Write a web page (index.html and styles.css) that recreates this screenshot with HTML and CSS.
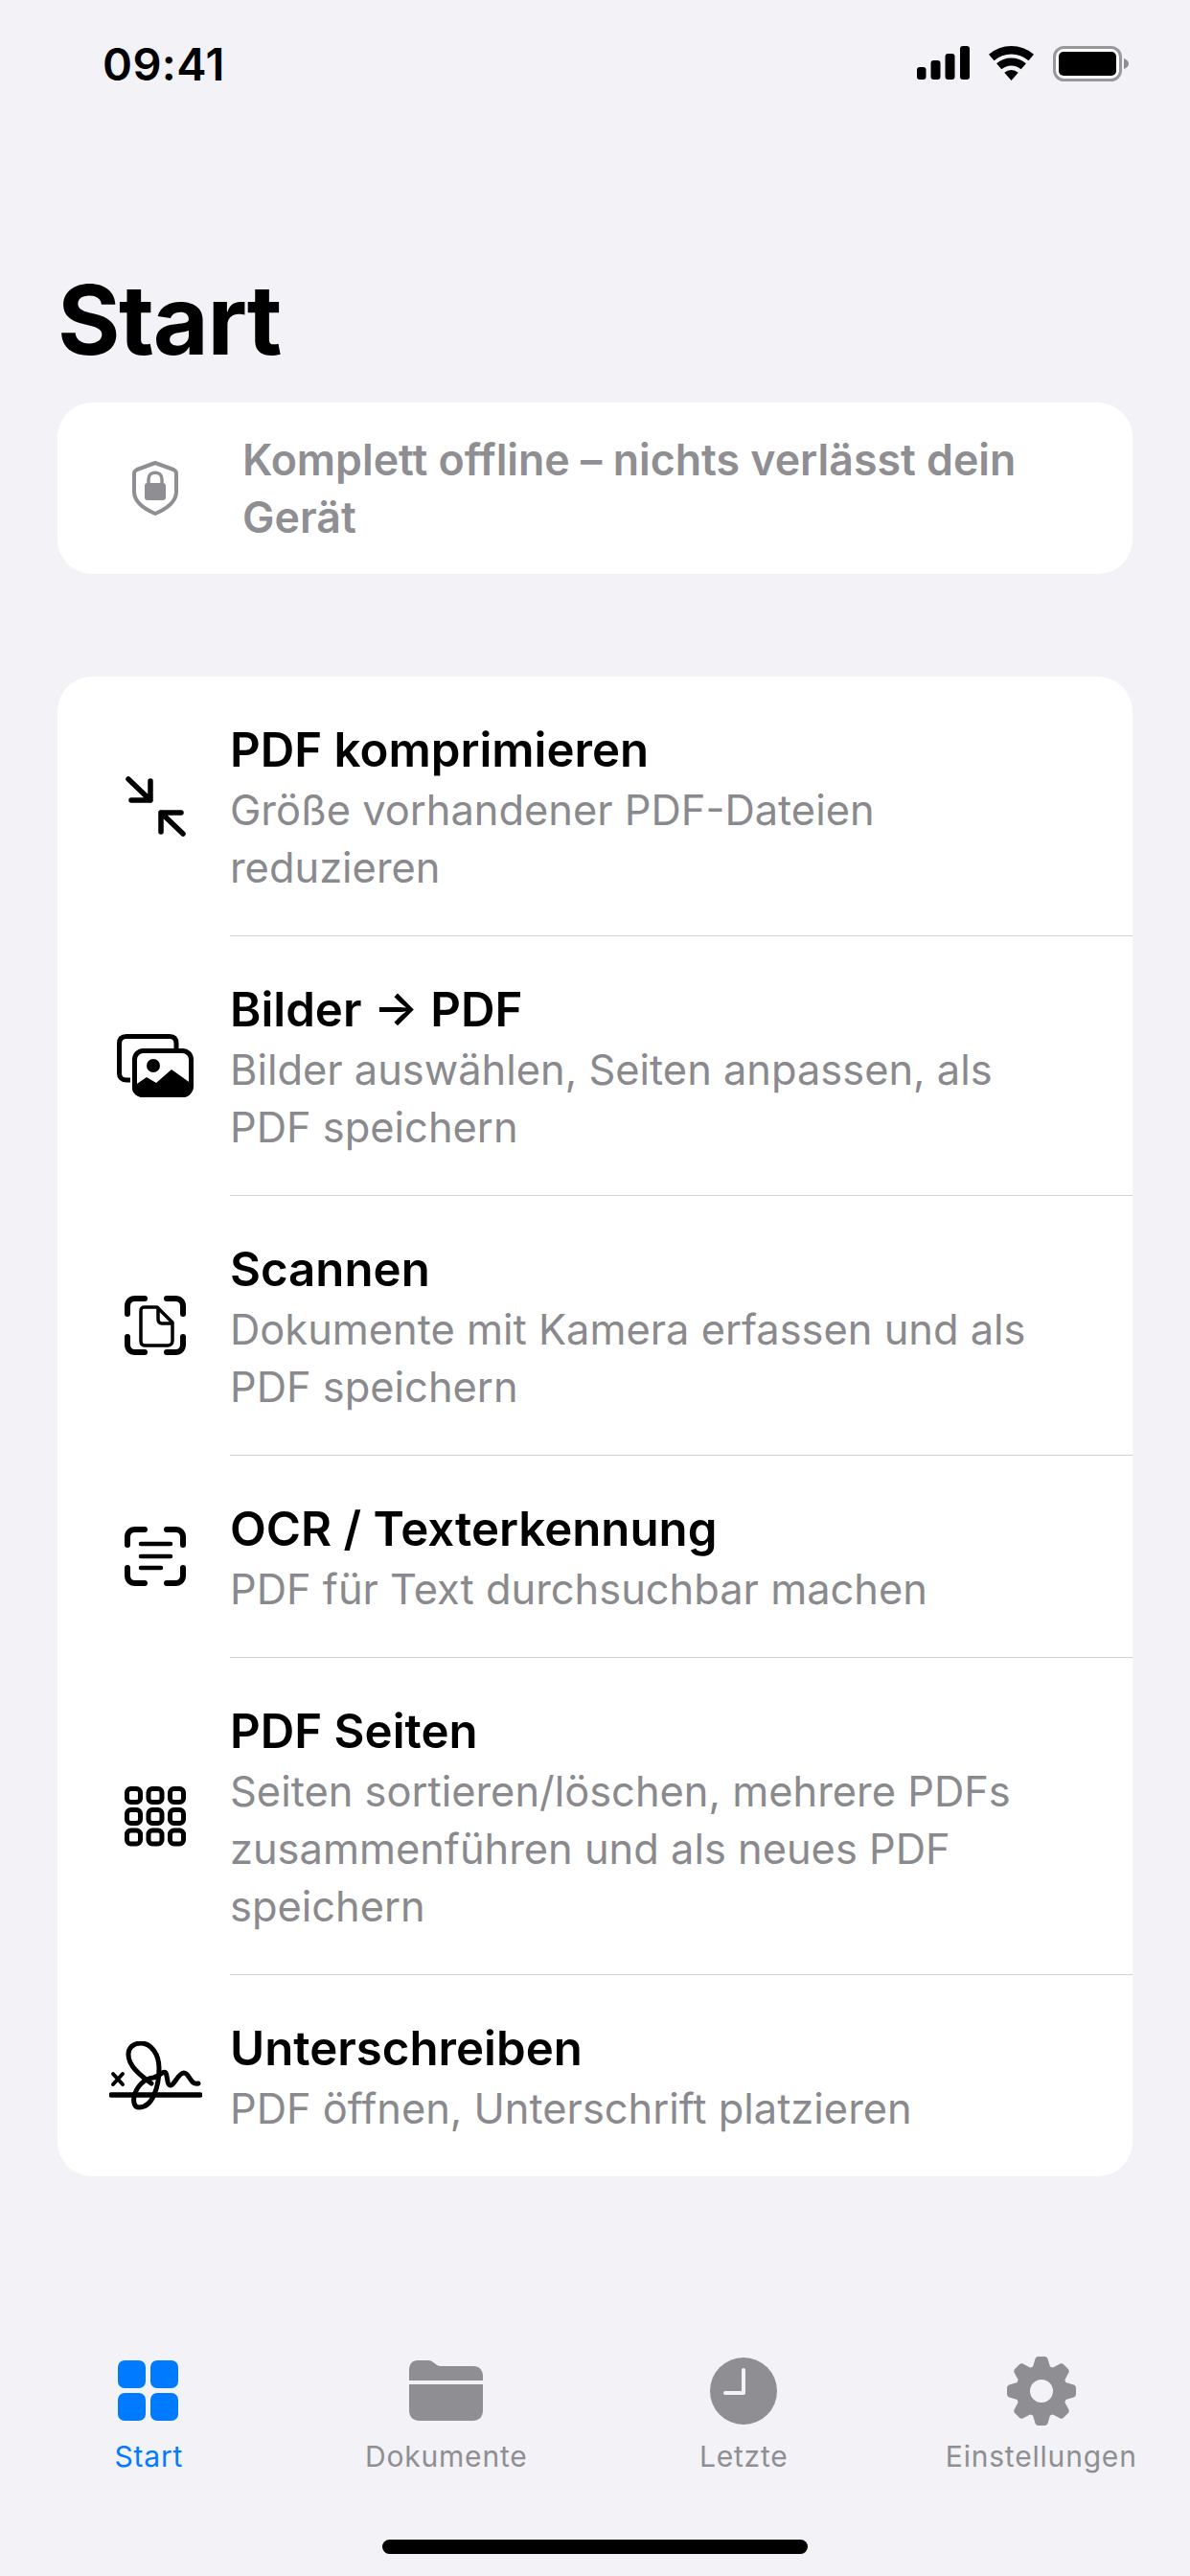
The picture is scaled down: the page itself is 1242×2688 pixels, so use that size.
FILE: index.html
```html
<!DOCTYPE html>
<html lang="de">
<head>
<meta charset="utf-8">
<title>Start</title>
<link rel="stylesheet" href="styles.css">
</head>
<body>
<div class="screen">
  <div class="status">
    <span class="time">09:41</span>
    <div class="status-icons">
      <svg width="55" height="36" viewBox="0 0 55 36"><rect x="0" y="22" width="9.500" height="13" rx="3"/><rect x="14.500" y="15" width="10" height="20" rx="3"/><rect x="29.500" y="8" width="10" height="27" rx="3"/><rect x="45" y="0" width="10" height="35" rx="3"/></svg>
      <svg width="47" height="36" viewBox="0 0 47 36"><path d="M0 8.800A36 36 0 0 1 47 8.800L41.500 15.200A27.500 27.500 0 0 0 5.500 15.200Z"/><path d="M8.100 18.300A23.500 23.500 0 0 1 38.900 18.300L33.700 24.300A15.500 15.500 0 0 0 13.300 24.300Z"/><path d="M16.300 27.700A11 11 0 0 1 30.700 27.700L23.500 36Z"/></svg>
      <svg width="79" height="37" viewBox="0 0 79 37"><rect x="1.500" y="1.500" width="69" height="34" rx="10" fill="#fff" stroke="#98989c" stroke-width="3"/><rect x="6" y="6" width="60" height="25" rx="5"/><path d="M74 13c3 1 5 3 5 5.500s-2 4.500-5 5.500Z" fill="#8e8e93"/></svg>
    </div>
  </div>

  <h1 class="title">Start</h1>

  <div class="card banner">
    <svg class="banner-icon" width="48" height="57" viewBox="0 0 48 57"><path d="M24 2 43 9c2 1 3 2 3 4v19c0 10-8 17-22 23C10 49 2 42 2 32V13c0-2 1-3 3-4Z" fill="none" stroke="#8e8e93" stroke-width="4" stroke-linejoin="round"/><rect x="13" y="23" width="22" height="18" rx="3" fill="#8e8e93"/><path d="M17 24v-5c0-9 14-9 14 0v5" fill="none" stroke="#8e8e93" stroke-width="3.500"/></svg>
    <p class="banner-text">Komplett offline – nichts verlässt dein Gerät</p>
  </div>

  <div class="card list">
    <div class="row">
      <div class="icon-cell"><svg width="63" height="63" viewBox="0 0 63 63" fill="none" stroke="#000" stroke-width="5.500" stroke-linecap="round" stroke-linejoin="round"><path d="M3 3 26 25M26 5V25H6"/><path d="M60 60 37 38M37 58V38H58"/></svg></div>
      <div class="row-text"><div class="row-title">PDF komprimieren</div><div class="row-sub">Größe vorhandener PDF-Dateien reduzieren</div></div>
    </div>
    <div class="row">
      <div class="icon-cell"><svg width="80" height="66" viewBox="0 0 80 66"><path d="M14 48H10C5 48 2.500 45 2.500 41V10C2.500 5 5 2.500 10 2.500H55C60 2.500 62 5 62 10V15" fill="none" stroke="#000" stroke-width="5"/><rect x="18.500" y="17.500" width="59" height="46" rx="9" fill="none" stroke="#000" stroke-width="5"/><path d="M18 54 31 45 41 51 57 37 78 52V57C78 62 74 66 69 66H27C22 66 16 62 16 57Z" fill="#000"/><circle cx="38" cy="33" r="7" fill="#000"/></svg></div>
      <div class="row-text"><div class="row-title">Bilder → PDF</div><div class="row-sub">Bilder auswählen, Seiten anpassen, als PDF speichern</div></div>
    </div>
    <div class="row">
      <div class="icon-cell"><svg width="64" height="62" viewBox="0 0 64 62" fill="none" stroke="#000" stroke-linecap="round" stroke-linejoin="round"><path stroke-width="6" d="M3 19V11c0-5 3-8 8-8h10M44 3h9c5 0 8 3 8 8v8M3 43v8c0 5 3 8 8 8h10M61 43v8c0 5-3 8-8 8h-9"/><path stroke-width="3.500" d="M21 12H34L50 28V47c0 3-2 5-5 5H21c-3 0-4-2-4-5V16c0-3 1-4 4-4Z"/><path stroke-width="3.500" d="M35 13V24c0 3 1 5 4 5H49"/></svg></div>
      <div class="row-text"><div class="row-title">Scannen</div><div class="row-sub">Dokumente mit Kamera erfassen und als PDF speichern</div></div>
    </div>
    <div class="row">
      <div class="icon-cell"><svg width="64" height="62" viewBox="0 0 64 62" fill="none" stroke="#000" stroke-linecap="round" stroke-linejoin="round"><path stroke-width="6" d="M3 19V11c0-5 3-8 8-8h10M44 3h9c5 0 8 3 8 8v8M3 43v8c0 5 3 8 8 8h10M61 43v8c0 5-3 8-8 8h-9"/><path d="M17 18H48M17 31H48M17 43H38" stroke-width="4.500"/></svg></div>
      <div class="row-text"><div class="row-title">OCR / Texterkennung</div><div class="row-sub">PDF für Text durchsuchbar machen</div></div>
    </div>
    <div class="row">
      <div class="icon-cell"><svg width="64" height="63" viewBox="0 0 64 63" fill="none" stroke="#000" stroke-width="5"><rect x="2.500" y="2.500" width="14" height="14" rx="4"/><rect x="25" y="2.500" width="14" height="14" rx="4"/><rect x="47.500" y="2.500" width="14" height="14" rx="4"/><rect x="2.500" y="24.500" width="14" height="14" rx="4"/><rect x="25" y="24.500" width="14" height="14" rx="4"/><rect x="47.500" y="24.500" width="14" height="14" rx="4"/><rect x="2.500" y="46" width="14" height="14" rx="4"/><rect x="25" y="46" width="14" height="14" rx="4"/><rect x="47.500" y="46" width="14" height="14" rx="4"/></svg></div>
      <div class="row-text"><div class="row-title">PDF Seiten</div><div class="row-sub">Seiten sortieren/löschen, mehrere PDFs zusammenführen und als neues PDF speichern</div></div>
    </div>
    <div class="row">
      <div class="icon-cell"><svg width="97" height="72" viewBox="0 0 97 72" fill="none" stroke="#000" stroke-width="5" stroke-linecap="round" stroke-linejoin="round"><path stroke-width="4" d="M4 34 14 45M14 34 4 45"/><path d="M2 56H95" stroke-width="5.500"/><path d="M44 44C33 36 20 26 20 14 20 6 26 2 33 2 44 2 52 14 52 28 52 46 46 69 31 69 26 69 25 63 26 58 28 48 36 39 46 38 52 37 57 30 59 33 61 36 60 46 64 46 68 46 72 33 78 33 84 33 84 46 93 44"/></svg></div>
      <div class="row-text"><div class="row-title">Unterschreiben</div><div class="row-sub">PDF öffnen, Unterschrift platzieren</div></div>
    </div>
  </div>

  <nav class="tabbar">
    <div class="tab active">
      <svg width="64" height="72" viewBox="0 0 64 72" fill="#007aff"><rect x="0" y="4" width="29" height="29" rx="7"/><rect x="34" y="4" width="29" height="29" rx="7"/><rect x="0" y="38" width="29" height="29" rx="7"/><rect x="34" y="38" width="29" height="29" rx="7"/></svg>
      <span>Start</span>
    </div>
    <div class="tab">
      <svg width="77" height="72" viewBox="0 0 77 72" fill="#8e8e93"><path d="M0 25V14C0 8 3 4 9 4H20C26 4 27 10 33 10H67C73 10 77 14 77 20V25Z"/><path d="M0 29H77V56C77 63 73 67 66 67H11C4 67 0 63 0 56Z"/></svg>
      <span>Dokumente</span>
    </div>
    <div class="tab">
      <svg width="70" height="72" viewBox="0 0 70 72"><circle cx="35" cy="36" r="35" fill="#8e8e93"/><path d="M35 14V38H16" fill="none" stroke="#f2f2f7" stroke-width="4" stroke-linecap="round" stroke-linejoin="round"/></svg>
      <span>Letzte</span>
    </div>
    <div class="tab">
      <svg width="72" height="72" viewBox="0 0 72 72" fill="#8e8e93">
        <circle cx="36" cy="36" r="27"/>
        <g>
          <path d="M26 14 29 4Q29.700 0 33 0H39Q42.300 0 43 4L46 14Z"/>
          <path transform="rotate(45 36 36)" d="M26 14 29 4Q29.700 0 33 0H39Q42.300 0 43 4L46 14Z"/>
          <path transform="rotate(90 36 36)" d="M26 14 29 4Q29.700 0 33 0H39Q42.300 0 43 4L46 14Z"/>
          <path transform="rotate(135 36 36)" d="M26 14 29 4Q29.700 0 33 0H39Q42.300 0 43 4L46 14Z"/>
          <path transform="rotate(180 36 36)" d="M26 14 29 4Q29.700 0 33 0H39Q42.300 0 43 4L46 14Z"/>
          <path transform="rotate(225 36 36)" d="M26 14 29 4Q29.700 0 33 0H39Q42.300 0 43 4L46 14Z"/>
          <path transform="rotate(270 36 36)" d="M26 14 29 4Q29.700 0 33 0H39Q42.300 0 43 4L46 14Z"/>
          <path transform="rotate(315 36 36)" d="M26 14 29 4Q29.700 0 33 0H39Q42.300 0 43 4L46 14Z"/>
        </g>
        <circle cx="36" cy="36" r="12" fill="#f2f2f7"/>
      </svg>
      <span>Einstellungen</span>
    </div>
  </nav>
  <div class="home-indicator"></div>
</div>
</body>
</html>
```
FILE: styles.css
```css
* { box-sizing: border-box; margin: 0; padding: 0; }
html, body { background: #f2f2f7; }
body { font-family: Inter, "Liberation Sans", sans-serif; color: #000; }
.screen { width: 1242px; height: 2688px; position: relative; overflow: hidden; background: #f2f2f7; padding: 0 60px; }
.status { height: 132px; display: flex; justify-content: space-between; align-items: center; margin: 0 4px 0 47px; }
.time { font-size: 47px; font-weight: 600; letter-spacing: 0.4px; }
.status-icons { display: flex; align-items: center; gap: 20px; }
.title { font-size: 100px; font-weight: 700; line-height: 124px; margin-top: 140px; letter-spacing: -1.4px; }
.card { background: #fff; border-radius: 36px; }
.banner { display: flex; align-items: center; margin-top: 24px; height: 179px; padding: 0 40px 0 78px; gap: 67px; }
.banner-icon { flex: none; }
.banner-text { font-size: 44.7px; font-weight: 600; line-height: 60px; color: #8e8e93; }
.list { margin-top: 106.500px; overflow: hidden; }
.row { display: flex; align-items: center; position: relative; padding: 44px 70px 43px 0; }
.row + .row::before { content: ""; position: absolute; left: 180px; right: 0; top: 0; height: 1px; background: #d1d1d6; }
.row + .row { padding-top: 45px; }
.icon-cell { width: 180px; flex: none; display: flex; justify-content: center; padding-left: 24px; }
.row-title { font-size: 49.2px; font-weight: 600; line-height: 65px; }
.row-sub { font-size: 43.4px; line-height: 60px; color: #8a8a8e; margin-bottom: -2px; }
.tabbar { position: absolute; left: 0; right: 0; top: 2459px; display: grid; grid-template-columns: repeat(4, 1fr); }
.tab { display: flex; flex-direction: column; align-items: center; gap: 12px; }
.tab span { font-size: 30px; line-height: 40px; letter-spacing: 0.8px; color: #8e8e93; font-weight: 400; }
.tab.active span { color: #007aff; }
.home-indicator { position: absolute; left: 399px; top: 2650px; width: 444px; height: 15px; border-radius: 8px; background: #000; }
```
